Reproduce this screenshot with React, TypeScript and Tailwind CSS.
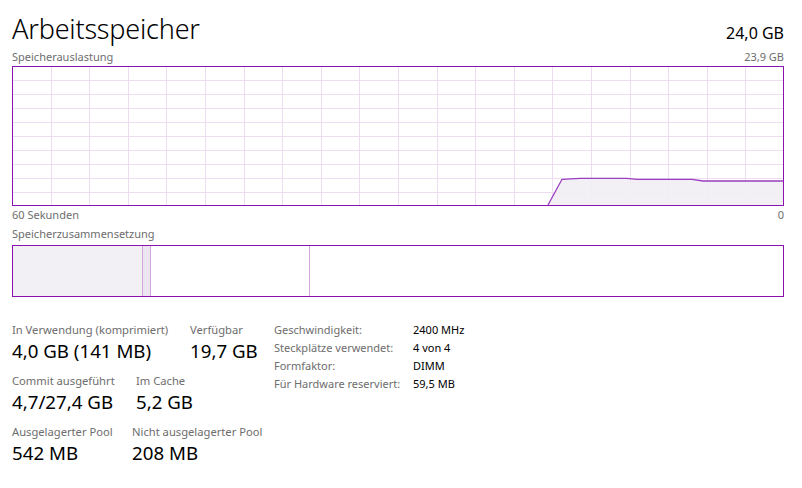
import React from "react";

const font = { fontFamily: '"Noto Sans", "Segoe UI", sans-serif' };

function Chart() {
  const W = 772;
  const H = 140;
  const cols = 20;
  const rows = 10;
  const vLines = [];
  for (let i = 1; i < cols; i++) {
    const x = Math.round((W * i) / cols) + 0.5;
    vLines.push(<line key={"v" + i} x1={x} y1={0} x2={x} y2={H} stroke="#eedcf3" strokeWidth={1} />);
  }
  const hLines = [];
  for (let i = 1; i < rows; i++) {
    const y = Math.round((H * i) / rows) + 0.5;
    hLines.push(<line key={"h" + i} x1={0} y1={y} x2={W} y2={y} stroke="#eedcf3" strokeWidth={1} />);
  }
  const pts: [number, number][] = [
    [536, 139],
    [550, 113.3],
    [568, 112.3],
    [615, 112.3],
    [625, 113.3],
    [680, 113.3],
    [691, 115],
    [771, 115],
  ];
  const line = pts.map((p) => p.join(",")).join(" ");
  const area = line + ` 771,139 536,139`;
  return (
    <svg width={W} height={H} className="block">
      {vLines}
      {hLines}
      <polygon points={area} fill="#f1eef3" fillOpacity={0.9} />
      <polyline points={line} fill="none" stroke="#9b3ec1" strokeWidth={1.3} />
      <rect x={0.5} y={0.5} width={W - 1} height={H - 1} fill="none" stroke="#8b12ae" strokeWidth={1} />
    </svg>
  );
}

function Stat({ label, value, className = "" }: { label: string; value: string; className?: string }) {
  return (
    <div className={"flex flex-col " + className}>
      <div className="text-[11.2px] leading-[16px] text-[#6d6d6d]">{label}</div>
      <div className="text-[18.7px] leading-[26px] text-black">{value}</div>
    </div>
  );
}

export default function App() {
  return (
    <div className="w-[802px] h-[488px] bg-white pl-[12px] pr-[18px] overflow-hidden" style={font}>
      <div className="flex items-end justify-between pt-[10px] h-[46px]">
        <div className="text-[27px] leading-[34px] text-black font-light tracking-[-0.2px]">Arbeitsspeicher</div>
        <div className="text-[16px] leading-[22px] text-black mb-[2px]">24,0 GB</div>
      </div>
      <div className="flex justify-between text-[11px] leading-[14px] text-[#6d6d6d] mt-[4px] h-[16px]">
        <span>Speicherauslastung</span>
        <span>23,9 GB</span>
      </div>
      <Chart />
      <div className="flex justify-between text-[11px] leading-[14px] text-[#6d6d6d] mt-[2px] h-[16px]">
        <span>60 Sekunden</span>
        <span>0</span>
      </div>
      <div className="text-[11px] leading-[14px] text-[#6d6d6d] mt-[3px] h-[18px]">Speicherzusammensetzung</div>
      <div className="flex h-[52px] border border-[#8b12ae]">
        <div className="w-[130px] bg-[#f2f0f4] border-r border-[#d2a6dd]" />
        <div className="w-[8px] bg-[#eee5f2] border-r border-[#d2a6dd]" />
        <div className="w-[159px] bg-white border-r border-[#d2a6dd]" />
        <div className="flex-1 bg-white" />
      </div>
      <div className="flex items-start mt-[25px]">
        <div className="flex flex-col gap-[9px] w-[262px]">
          <div className="flex">
            <Stat label="In Verwendung (komprimiert)" value="4,0 GB (141 MB)" className="w-[178px]" />
            <Stat label="Verfügbar" value="19,7 GB" />
          </div>
          <div className="flex">
            <Stat label="Commit ausgeführt" value="4,7/27,4 GB" className="w-[124px]" />
            <Stat label="Im Cache" value="5,2 GB" />
          </div>
          <div className="flex">
            <Stat label="Ausgelagerter Pool" value="542 MB" className="w-[120px]" />
            <Stat label="Nicht ausgelagerter Pool" value="208 MB" />
          </div>
        </div>
        <div className="grid grid-cols-[139px_auto] content-start text-[11px] leading-[18px] mt-[-1px]">
          <span className="text-[#6d6d6d]">Geschwindigkeit:</span>
          <span className="text-black">2400 MHz</span>
          <span className="text-[#6d6d6d]">Steckplätze verwendet:</span>
          <span className="text-black">4 von 4</span>
          <span className="text-[#6d6d6d]">Formfaktor:</span>
          <span className="text-black">DIMM</span>
          <span className="text-[#6d6d6d]">Für Hardware reserviert:</span>
          <span className="text-black">59,5 MB</span>
        </div>
      </div>
    </div>
  );
}
